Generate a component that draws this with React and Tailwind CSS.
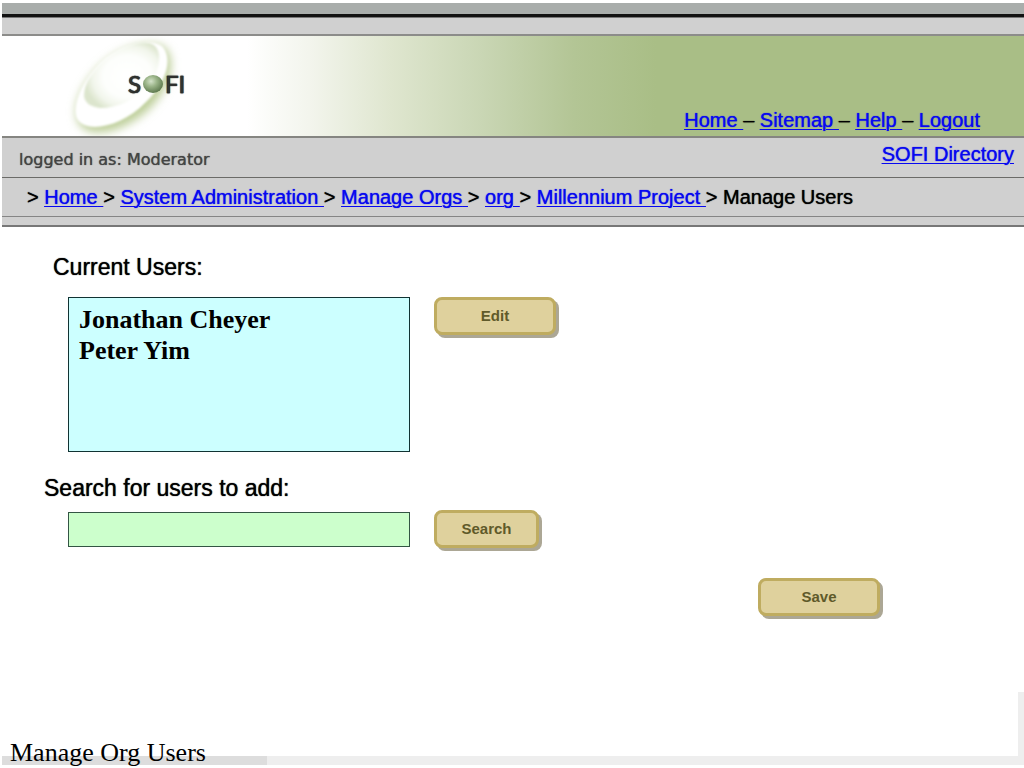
import { useState } from 'react';

const navLinks = ['Home', 'Sitemap', 'Help', 'Logout'];
const breadcrumb = ['Home', 'System Administration', 'Manage Orgs', 'org', 'Millennium Project'];
const users = ['Jonathan Cheyer', 'Peter Yim'];

const linkClass = 'text-[#0808f0] underline decoration-1 underline-offset-2';

const Logo = () => (
  <svg className="block h-[100px] w-[200px] shrink-0" viewBox="0 36 200 100" role="img" aria-label="SOFI">
    <defs>
      <filter id="glow" x="-30%" y="-30%" width="160%" height="160%">
        <feGaussianBlur stdDeviation="5" />
      </filter>
      <filter id="soft">
        <feGaussianBlur stdDeviation="0.8" />
      </filter>
      <radialGradient id="hole" cx="0.58" cy="0.52" r="0.58">
        <stop offset="0" stopColor="#ffffff" />
        <stop offset="0.55" stopColor="#fdfefc" />
        <stop offset="0.8" stopColor="#f2f6ec" />
        <stop offset="1" stopColor="#dce5cd" />
      </radialGradient>
      <radialGradient id="ball" cx="0.4" cy="0.35" r="0.65">
        <stop offset="0" stopColor="#d3e2c9" />
        <stop offset="0.45" stopColor="#9ab488" />
        <stop offset="1" stopColor="#5f7b50" />
      </radialGradient>
    </defs>
    <path
      d="M77 123 C70 110 78 87 98 67 C118 48 150 38 163 48 C175 60 168 88 148 108 C126 130 88 142 77 123 Z"
      fill="#bccd97"
      filter="url(#glow)"
    />
    <path
      d="M75 119 C69 107 79 82 98 63 C116 46 146 36 160 46 C172 58 164 84 143 103 C120 127 84 134 75 119 Z"
      fill="#ffffff"
      filter="url(#soft)"
    />
    <path
      d="M82 96 C82 83 91 69 106 57 C122 45 144 38 153 46 C161 54 157 72 147 85 C133 100 116 108 98 108 C90 107 83 104 82 96 Z"
      fill="url(#hole)"
      filter="url(#soft)"
    />
    <g fontFamily="Lato, sans-serif" fontSize="24" fill="#3a3d3a" stroke="#3a3d3a" strokeWidth="0.500">
      <text x="126" y="93">S</text>
      <text x="163" y="93">FI</text>
    </g>
    <ellipse cx="151" cy="84" rx="10" ry="9" fill="url(#ball)" />
  </svg>
);

const PanelButton = ({ children, wide, onClick }) => (
  <button
    type="button"
    onClick={onClick}
    className={`h-[38px] shrink-0 cursor-pointer rounded-lg border-3 border-[#bfac60] bg-[#dfd19d] font-['Liberation_Sans_Narrow','Liberation_Sans',sans-serif] text-[15px] font-bold text-[#5f5a2a] shadow-[3px_3px_0_#aca795] ${wide ? 'w-[122px]' : 'w-[105px]'}`}
  >
    {children}
  </button>
);

const App = () => {
  const [selected, setSelected] = useState([]);
  const [search, setSearch] = useState('');

  const handleSelect = (e) => {
    setSelected(Array.from(e.target.selectedOptions).map(option => option.value));
  };

  return (
    <div className="flex min-h-screen flex-col bg-white pt-[3px] pb-[3px] font-['Liberation_Sans',Arial,sans-serif] text-black">
      <header className="ml-[2px] text-xl leading-6 [text-shadow:0_0_1px_currentColor]">
        <div className="h-[11px] bg-[#a9adab]"></div>
        <div className="h-1 border-b border-[#777] bg-[#111]"></div>
        <div className="h-[18px] border-b-2 border-[#8c8c8a] bg-[#d0d0d0]"></div>

        <div className="flex items-end justify-between bg-[linear-gradient(to_right,#ffffff_24%,#f3f5ed_30%,#dfe6cf_38%,#c9d6b4_47%,#b3c595_56%,#a9be86_64%)]">
          <Logo />
          <nav className="pr-11 pb-1">
            {navLinks.map((name, index) => (
              <span key={name}>
                {index > 0 && '– '}
                <a href="#" className={linkClass}>{name}{index < navLinks.length - 1 && ' '}</a>
              </span>
            ))}
          </nav>
        </div>

        <div className="flex h-[42px] items-center justify-between border-t-2 border-b border-t-[#858581] border-b-[#6b6b68] bg-[#d0d0d0] pr-[10px] pl-[17px]">
          <p className="pt-1 font-['DejaVu_Sans',sans-serif] text-base text-[#444]">logged in as: Moderator</p>
          <a href="#" className={`pb-2 ${linkClass}`}>SOFI Directory</a>
        </div>

        <nav className="h-[39px] border-b border-[#858585] bg-[#d0d0d0] pt-[7px] pl-[25px]">
          {breadcrumb.map(name => (
            <span key={name}>
              {'> '}
              <a href="#" className={linkClass}>{name}{' '}</a>
            </span>
          ))}
          {'> Manage Users'}
        </nav>
        <div className="h-[10px] border-b-2 border-[#777] bg-[#d0d0d0]"></div>
      </header>

      <div className="flex grow">
        <main className="grow pt-[26px]">
          <label htmlFor="current-users" className="ml-[53px] block text-[23px] leading-7 [text-shadow:0_0_1px_currentColor]">
            Current Users:
          </label>
          <div className="mt-4 ml-[68px] flex items-start gap-6">
            <select
              id="current-users"
              multiple
              value={selected}
              onChange={handleSelect}
              className="h-[155px] w-[342px] border border-[#133] bg-[#ccffff] px-2 py-[7px] font-['Liberation_Serif',serif] text-[26px]"
            >
              {users.map(user => (
                <option key={user} value={user} className="h-[31px] p-0 px-[2px] leading-[31px] font-bold">{user}</option>
              ))}
            </select>
            <PanelButton wide>Edit</PanelButton>
          </div>

          <label htmlFor="user-search" className="mt-[22px] ml-11 block text-[23px] leading-7 [text-shadow:0_0_1px_currentColor]">
            Search for users to add:
          </label>
          <div className="mt-2 ml-[68px] flex items-center gap-6">
            <input
              id="user-search"
              type="text"
              value={search}
              onChange={(e) => setSearch(e.target.value)}
              className="h-[35px] w-[342px] border border-[#354] bg-[#ccffcc] px-2 text-xl"
            />
            <PanelButton>Search</PanelButton>
          </div>

          <div className="mt-[30px] flex justify-end pr-[138px]">
            <PanelButton wide>Save</PanelButton>
          </div>
        </main>
        <div className="h-16 w-[6px] shrink-0 self-end bg-[#eeeeee]"></div>
      </div>

      <footer className="relative ml-[2px] flex h-[9px] bg-[#eeeeee]">
        <div className="w-[265px] bg-[#dddddd]"></div>
        <p className="absolute -bottom-1 left-2 font-['Liberation_Serif',serif] text-[26px] leading-8">Manage Org Users</p>
      </footer>
    </div>
  );
};

export default App;
